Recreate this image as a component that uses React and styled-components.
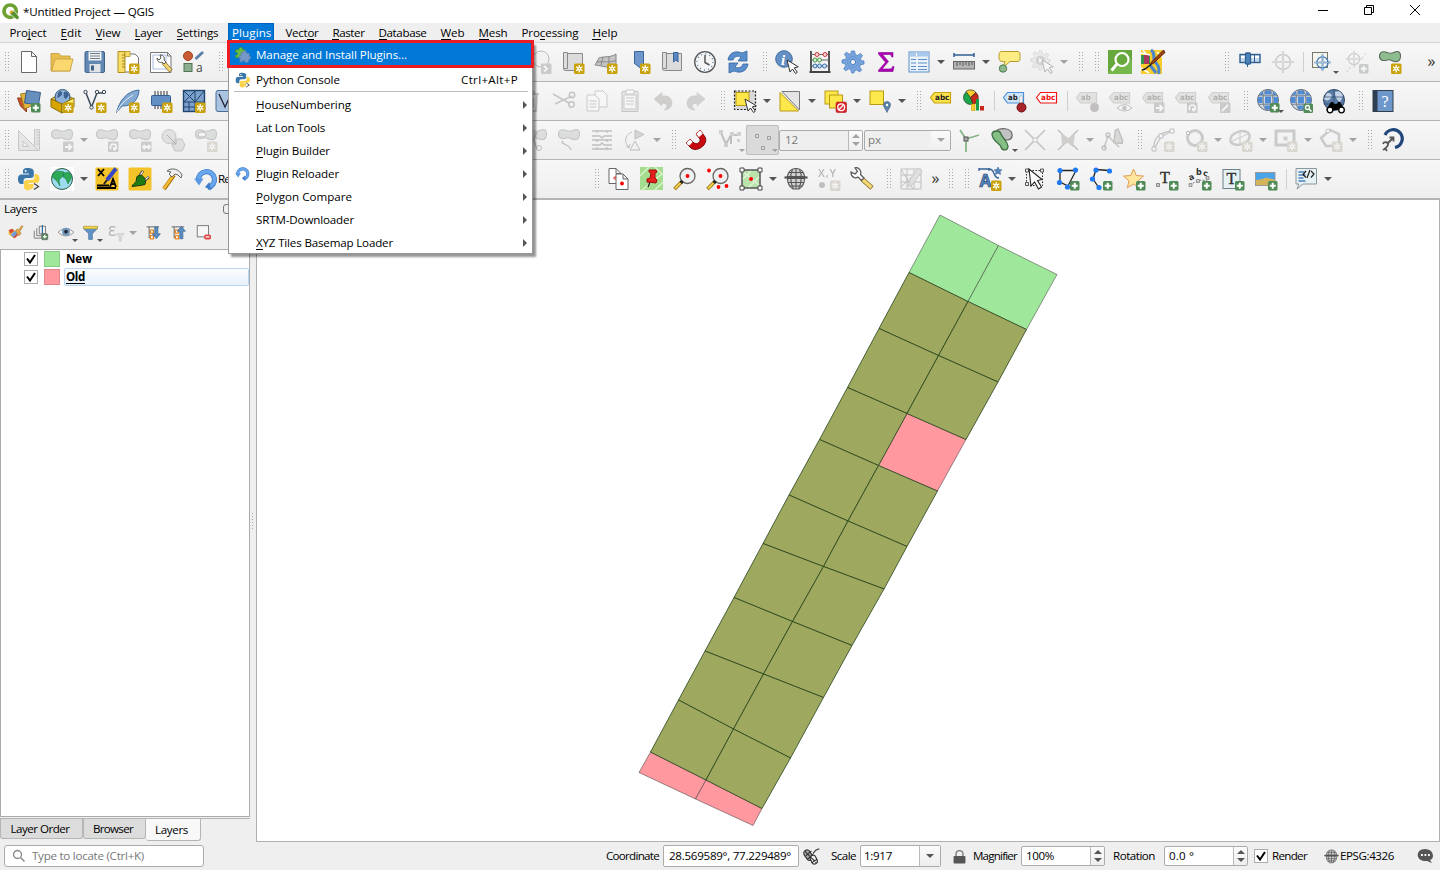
import React, { useLayoutEffect, useRef, useState } from 'react';
import styled, { createGlobalStyle, css } from 'styled-components';

const GlobalStyle = createGlobalStyle`
  * { box-sizing: border-box; }
  html, body { margin: 0; padding: 0; overflow: hidden; }
  body {
    font-family: "Open Sans", "Noto Sans", sans-serif;
    font-size: 11.6px;
    color: #000;
    background: #efefef;
  }
  u { text-decoration: none; border-bottom: 1px solid currentColor; display: inline-block; line-height: 12px; }
`;

/* ---------- text ---------- */

const FitText = styled.span`
  display: inline-block;
  flex: none;
  white-space: nowrap;
  font-weight: ${(p) => (p.$bold ? 700 : 400)};
  line-height: 16px;
`;

// Keeps a label at its designed width by adjusting the tracking.
function Fit({ w, bold, children }) {
  const ref = useRef(null);
  const [spacing, setSpacing] = useState(0);
  useLayoutEffect(() => {
    const el = ref.current;
    const natural = el.getBoundingClientRect().width;
    setSpacing((w - natural) / el.textContent.length);
  }, [w]);
  return (
    <FitText ref={ref} $bold={bold} style={{ letterSpacing: `${spacing}px` }}>
      {children}
    </FitText>
  );
}

/* ---------- window frame ---------- */

const Window = styled.div`
  position: relative;
  width: 1440px;
  height: 870px;
  display: flex;
  flex-direction: column;
  background: #efefef;
  overflow: hidden;
`;
const TitleBar = styled.header`
  height: 23px;
  flex: none;
  display: flex;
  align-items: center;
  background: #fff;
  padding: 0 19px 0 2px;
  gap: 4px;
`;
const WindowButtons = styled.div`
  margin-left: auto;
  display: flex;
  gap: 34px;
  margin-top: -3px;
`;
const MenuBar = styled.nav`
  height: 20px;
  flex: none;
  display: flex;
  align-items: stretch;
  padding-left: 5.5px;
  border-bottom: 1px solid #d3d3d3;
`;
const MenuTitle = styled.div`
  display: flex;
  align-items: center;
  padding: 0 3px 0 4px;
  margin-right: 7px;
  ${(p) =>
    p.$open &&
    css`
      margin-left: -0.5px;
      background: #0078d7;
      color: #fff;
      box-shadow: inset 0 0 0 1px #0062b8;
    `}
`;

/* ---------- toolbars ---------- */

const ToolRow = styled.div`
  height: 39px;
  flex: none;
  display: flex;
  align-items: center;
  background: linear-gradient(#f7f7f7, #eeeeee);
  border-bottom: 1px solid #b4b4b4;
  padding-left: 12.5px;
`;
const HandleBox = styled.div`
  width: 16px;
  flex: none;
  display: flex;
  padding-left: 8.5px;
`;
const Dots = styled.i`
  width: 5px;
  height: 20px;
  background-image: radial-gradient(circle at 0.5px 0.5px, #a9a9a9 0.6px, transparent 0.8px);
  background-size: 3px 3px;
`;
const Handle = () => (
  <HandleBox>
    <Dots />
  </HandleBox>
);
const LeadHandle = styled(HandleBox)`
  margin-left: -16px;
`;
const Gap = styled.div`
  width: ${(p) => p.$w}px;
  flex: none;
`;
const ToolCaption = styled.div`
  width: 368.5px;
  margin-left: -4.5px;
  flex: none;
`;
const Divider = styled.div`
  width: 7px;
  height: 20px;
  flex: none;
  background: linear-gradient(#cfcfcf, #cfcfcf) 3.5px 0 / 1px 100% no-repeat;
`;
const ToolBox = styled.div`
  width: ${(p) => (p.$menu ? 45 : 33)}px;
  height: 30px;
  flex: none;
  position: relative;
  display: flex;
  align-items: center;
  padding-left: 4.5px;
  gap: 6px;
  svg.art {
    flex: none;
    overflow: visible;
    ${(p) =>
      p.$off &&
      css`
        filter: grayscale(0.85);
        opacity: ${p.$pressed ? 0.6 : 0.32};
      `}
  }
  ${(p) =>
    p.$pressed &&
    css`
      background: #dadada;
      border-radius: 2px;
      box-shadow: inset 0 0 0 1px #bdbdbd;
    `}
`;
const Arrow = styled.i`
  width: 0;
  height: 0;
  flex: none;
  border: 4px solid transparent;
  border-top-color: ${(p) => (p.$off ? '#a3a3a3' : '#555')};
  border-bottom: 0;
`;
const CornerArrow = styled(Arrow)`
  position: absolute;
  right: 1px;
  bottom: 3px;
  border-width: 3px;
  border-bottom: 0;
`;
const Chevron = styled.span`
  width: 13px;
  font-size: 16px;
  line-height: 20px;
  height: 23px;
  padding-left: 4px;
  flex: none;
  color: #333;
`;
const SpinBox = styled.div`
  width: ${(p) => p.$w}px;
  height: ${(p) => p.$h || 21}px;
  flex: none;
  display: flex;
  align-items: center;
  background: ${(p) => (p.$off ? '#efefef' : '#fff')};
  color: ${(p) => (p.$off ? '#787878' : '#000')};
  border: 1px solid #ababab;
  border-radius: 2px;
  padding-left: ${(p) => p.$pad || 5}px;
  overflow: hidden;
`;
const SpinArrows = styled.div`
  width: ${(p) => p.$w || 14}px;
  align-self: stretch;
  margin-left: auto;
  border-left: ${(p) => (p.$plain ? '0' : '1px solid #b9b9b9')};
  background: linear-gradient(#fbfbfb, #eee);
  display: flex;
  flex-direction: column;
  align-items: center;
  justify-content: center;
  gap: 4px;
`;
const UpArrow = styled(Arrow)`
  transform: rotate(180deg);
`;

/* ---------- icon drawing ---------- */

const Star = () => (
  <g>
    <rect x="13" y="13.5" width="10.5" height="10.5" rx="1.5" fill="#c9a20b" />
    <path d="M18.2 15v7.4M15 16.8l6.4 3.8M21.4 16.8 15 20.6" stroke="#fff" strokeWidth="1.3" />
    <circle cx="18.2" cy="18.7" r="1.7" fill="#fff" />
    <circle cx="18.2" cy="18.7" r=".7" fill="#c9a20b" />
  </g>
);
const Plus = () => (
  <g>
    <rect x="14" y="14" width="9.5" height="9.5" rx="1.5" fill="#508a57" />
    <path d="M18.750 15.700v6M15.750 18.700h6" stroke="#fff" strokeWidth="2" />
  </g>
);
const BadgeArrow = ({ d = 'M15 19h6M18.5 16l3 3-3 3' }) => (
  <g>
    <rect x="13" y="13.5" width="10.5" height="10.5" rx="1" fill="#6f7f6f" />
    <path d={d} stroke="#fff" strokeWidth="1.8" fill="none" />
  </g>
);
const Blob = ({ fill = '#8dbd8f' }) => (
  <path
    d="M1.500 6C1.500 1.500 6 1 9 2.500s5 1 8-.5c4-1.500 6 1 5.500 5s-3 5-6 4.500-4-2.500-7-1.500c-4 1-8 1-8-4z"
    fill={fill}
    stroke="#5b6b5b"
    strokeWidth="1.1"
  />
);
const Tag = ({ fill = '#fbe24a', stroke = '#c9a20b', ink = '#222', text = 'abc' }) => (
  <g>
    <path d="M1.500 10 5.500 5h16v10.500h-16z" fill={fill} stroke={stroke} strokeWidth="1.200" />
    <text x="6" y="12.800" fontSize="7.600" fontWeight="700" fontFamily="DejaVu Sans, sans-serif" fill={ink} textLength={text.length * 4.8} lengthAdjust="spacingAndGlyphs">
      {text}
    </text>
  </g>
);
const Globe = () => (
  <g>
    <circle cx="12" cy="11" r="10.500" fill="#d3d6da" stroke="#5f6f82" />
    <path d="M9 1.500h6v4H9zM9 7.500h6v7H9zM9 16.500h6v4H9zM2 8h4.500v6H2zM17.500 8H22v6h-4.500zM4.500 4l3-1.500-.8 3.500H3.500zM19.500 4l-3-1.500.8 3.500h3.200z" fill="#4f8cd6" />
    <ellipse cx="12" cy="11" rx="5" ry="10.500" stroke="#6b7a8c" strokeWidth="1" />
    <path d="M3 6.700h18M3 15.300h18" stroke="#7a8896" strokeWidth="1" />
  </g>
);
const Python = () => (
  <g>
    <path d="M11 1C6 1 6 3 6 4.500v2h6v1H4.500C1.500 7.500 1 10 1 12.500S2 17 4.500 17h2v-3c0-2 1-3 3-3h4.300c2 0 3-1 3-3V4.500C16.800 2 14 1 11 1z" fill="#3b77a8" />
    <path d="M12 22.500c4.500 0 4.500-2 4.500-3.500v-2h-5v-1h7.500c3 0 3.500-2.500 3.500-4.500s-1-4.500-3.500-4.500h-1.500v3c0 2-1 3-3 3h-4.500c-2 0-3 1-3 3v4c0 2.500 2 3.500 5 3.500z" fill="#fbd34b" />
    <circle cx="8.700" cy="4" r="1" fill="#fff" />
    <path d="m17 16.500 4.500 3-4.500 3" stroke="#444" strokeWidth="1.300" fill="none" />
  </g>
);
const Reload = () => (
  <g>
    <path d="M4.500 13.500A8 8 0 1 1 14 20.500" stroke="#3f7cc9" strokeWidth="5.200" />
    <path d="M4.500 13A8 8 0 1 1 14 20.300" stroke="#6ba7ee" strokeWidth="3.600" />
    <path d="M0 11.500h9.500l-4.500 7z" fill="#5b99e5" />
    <path d="m15.500 15-4.500 5 6 3.500z" fill="#3f7cc9" />
  </g>
);
const Crosshair = ({ color = '#999' }) => (
  <g fill="none" stroke={color} strokeWidth="1.500">
    <circle cx="12" cy="12" r="7.500" />
    <path d="M12 1v22M1 12h22" strokeWidth="2.200" />
    <path d="M12 1v22M1 12h22" strokeWidth=".6" stroke="#fff" />
  </g>
);
const Pointer = () => (
  <path d="M12 10l3 12 2.500-3 3 4.500 1.800-1.200-3-4.500 4-1z" fill="#fff" stroke="#333" strokeWidth="1" />
);
const Lens = () => (
  <g>
    <circle cx="14.500" cy="9" r="7.500" fill="#eeeff0" stroke="#666" strokeWidth="1.300" />
    <path d="m8.500 15-7 7" stroke="#8b6a00" strokeWidth="3.600" />
    <path d="m7.500 16-5.500 5.500" stroke="#f3cf4d" strokeWidth="2" />
    <path d="m9.500 14-1.700 1.700" stroke="#222" strokeWidth="3.400" />
    <circle cx="14.500" cy="9" r="1.900" fill="#f00" />
  </g>
);
const Wrench = () => (
  <g>
    <path d="m12 12 10 9" stroke="#8b7430" strokeWidth="5" />
    <path d="m12 12 9.500 8.500" stroke="#f2d675" strokeWidth="3.200" />
    <path d="M1 5c0 5 4 7 7 5l3.500 3.500 2.500-2.500L10.500 7.500C12 4 9 0 5 .8l2.500 3.700L5 7z" fill="#fff" stroke="#555" strokeWidth="1.200" />
  </g>
);
const Gear = ({ fill = '#78a3dc', stroke = '#4a7fc0' }) => (
  <g stroke={stroke}>
    <path
      d="M10.500 1h3l.8 3.600 2.200.9 3-2 2 2-2 3 .9 2.200L23 11v3l-3.400.7-1 2.200 2 3-2 2-3-2-2.200 1L12.800 23h-2l-.9-3.200-2.200-1-3 2-2-2 2-3-1-2.200L1 13v-3l3.400-.6 1-2.200-2-3 2-2 3 2 1.400-.7z"
      fill={fill}
      strokeWidth=".8"
    />
    <circle cx="12" cy="12" r="2.600" fill="#f4f4f4" />
    <circle cx="12" cy="12" r="5.500" fill="none" strokeWidth=".6" opacity=".5" />
  </g>
);
const VPoly = () => (
  <g fill="none" stroke="#3a4a58" strokeWidth="1.500">
    <path d="m3 4 5.500 14L14 4h6" />
    <g fill="#f4f4f4" strokeWidth="1">
      <circle cx="2.500" cy="3" r="1.700" />
      <circle cx="14" cy="3" r="1.700" />
      <circle cx="21" cy="3" r="1.700" />
      <circle cx="8.500" cy="18.500" r="1.700" />
    </g>
  </g>
);
const Scroll = () => (
  <path d="M2.500 2.500h4v16h-4zM6.500 3.500h15v17h-17c-2.500 0-2-2-2-2" fill="#dcdcdc" stroke="#888" />
);
const Serif = ({ x, y, size, children, weight = 700, fill = '#333' }) => (
  <text x={x} y={y} fontSize={size} fontWeight={weight} fontFamily="Liberation Serif, serif" fill={fill}>
    {children}
  </text>
);
const Page = ({ x, y, w, h }) => (
  <path
    d={`M${x} ${y}h${w - 5}l5 5v${h - 5}h-${w}zM${x + w - 5} ${y}v5h5`}
    fill="#fff"
    stroke="#666"
    strokeWidth="1"
  />
);
const PALE = { fill: '#cdbf8b', stroke: '#887' };

const ART = {
  newPage: <path d="M4.500 1.500h10l5 5v16h-15zM14.500 1.500v5h5" fill="#fff" stroke="#686868" />,
  folder: (
    <g stroke="#c09a3a" strokeWidth=".8">
      <path d="M1 21V3.500h8l2 2.500h9v15z" fill="#e8bf4f" />
      <path d="M1.500 21 5 9h18l-3 12z" fill="#fbd76f" />
    </g>
  ),
  save: (
    <g>
      <rect x="2" y="1.500" width="19.500" height="21" rx="1.500" fill="#6187b3" stroke="#3f6089" />
      <path d="M5.500 1.500h13v9h-13z" fill="#f1f3f5" />
      <path d="M7 3.500h10M7 6h10M7 8.500h10" stroke="#6f7a85" strokeWidth="1" />
      <path d="M6.500 14h11v8.500h-11z" fill="#e2e5e8" />
      <path d="M8 15.500h3v5H8z" fill="#3f6089" />
    </g>
  ),
  layout: (
    <g>
      <path d="M3 4h16l3.500 3.500V22H3z" fill="#fff" stroke="#777" />
      <path d="M2 1.500h7v21H2z" fill="#f8dc68" stroke="#b08f20" />
      <path d="M6 5h3M6 8h3M6 11h3M6 14h3M6 17h3" stroke="#8b7117" strokeWidth=".8" />
      <path d="M9 1.500h5v5H9z" fill="#f8dc68" stroke="#b08f20" strokeWidth=".8" />
      <Star />
    </g>
  ),
  layoutManager: (
    <g>
      <path d="M1.500 2.500h17l3.500 3.500v16.500H1.500zM18.500 2.500v3.500h3.500" fill="#fff" stroke="#777" />
      <path d="M4 5h13v14H4z" stroke="#a9bce0" />
      <path d="m14 12 8 9" stroke="#8b7430" strokeWidth="4.200" />
      <path d="m14 12 7.500 8.500" stroke="#f2d675" strokeWidth="2.800" />
      <path d="M8 8c0 4 3 5 5 4l2 2 2-2-2-2c1-3-1-5-4-5l1 3-2 2z" fill="#fff" stroke="#555" />
    </g>
  ),
  style: (
    <g>
      <circle cx="6" cy="6" r="4.500" fill="#c95a34" stroke="#a03e1e" />
      <path d="m13.500 9 7.500-7" stroke="#5c7fa8" strokeWidth="2.800" />
      <rect x="2" y="13.500" width="8" height="8" fill="#8dae8f" stroke="#4f7552" />
      <text x="14" y="21.500" fontSize="12" fontFamily="Open Sans, sans-serif" fill="#444">a</text>
    </g>
  ),
  zoomLast: (
    <g>
      <circle cx="13" cy="9" r="8" fill="#eee" stroke="#444" />
      <BadgeArrow d="m16 16 3 2.800-3 2.800" />
    </g>
  ),
  mapNew: <g><Scroll /><Star /></g>,
  map3d: (
    <g>
      <path d="M1 15 5 8c5-2 11 0 17-4v12c-6 3-12 0-21-1zM3 12c6-1 12 1 19-1.500M9 7 7 15M15 6v10" fill="#c4c4c4" stroke="#888" />
      <Star />
    </g>
  ),
  bookmarkNew: <g><path d="M7.500 1.500h9V20l-4.500-3-4.500-3.500z" fill="#6f97cb" stroke="#39649c" /><Star /></g>,
  bookmarks: <g><Scroll /><path d="M13.500 2.500h4.500V12l-2.200-2-2.300 2z" fill="#5a87c0" stroke="#39649c" /></g>,
  clock: (
    <g>
      <circle cx="12" cy="12" r="10.300" fill="#f4f4f4" stroke="#555" strokeWidth="1.300" />
      <circle cx="12" cy="12" r="8" fill="none" stroke="#4e80b5" strokeDasharray="1 3.190" strokeWidth="1.300" />
      <path d="M12 5v7.500l4.500 2.500" stroke="#555" fill="none" strokeWidth="1.500" />
    </g>
  ),
  refresh: (
    <g fill="#5a8fcb" stroke="#3468a4" strokeWidth=".8">
      <path d="M2 10C3 3 9 0 16 3l5-2v10H12l3-4c-4-2-7 0-8 3z" />
      <path d="M22 14c-1 7-7 10-14 7l-5 2V13h9l-3 4c4 2 7 0 8-3z" />
    </g>
  ),
  identify: (
    <g>
      <circle cx="9" cy="9" r="8.300" fill="#648fc4" stroke="#426e9e" />
      <Serif x="6" y="14.500" size="15" fill="#fff"><tspan fontStyle="italic">i</tspan></Serif>
      <Pointer />
    </g>
  ),
  abacus: (
    <g strokeWidth="1">
      <path d="M3 1v20M21 1v20M1.500 22h21" stroke="#444" strokeWidth="1.800" />
      <path d="M3 4.500h18M3 10h18M3 16h18" stroke="#666" />
      <g fill="#ffd6d6" stroke="#c33"><circle cx="9" cy="4.500" r="2" /><circle cx="17" cy="4.500" r="2" /></g>
      <g fill="#d9f4d9" stroke="#4a9a4a"><circle cx="7" cy="10" r="2" /><circle cx="11.500" cy="10" r="2" /></g>
      <g fill="#cfe2f6" stroke="#356da5"><circle cx="7" cy="16" r="2" /><circle cx="11.500" cy="16" r="2" /><circle cx="16.500" cy="16" r="2" /></g>
    </g>
  ),
  gear: <Gear />,
  sigma: <path d="M4.500 2.500h14.500v4.500h-1.200c-.5-2-1-2.500-3-2.500H8.500l6 7-6.500 7.500h7.500c2 0 2.500-.8 3.200-2.500H20l-1 5H4.500v-1.200l7-8-7-8.200z" fill="#b000b5" stroke="#80008a" strokeWidth=".6" />,
  table: (
    <g>
      <rect x="2" y="2" width="20" height="20" fill="#e9f1fa" stroke="#5f8fc4" />
      <path d="M2.500 2.500h19v4h-19z" fill="#a9c8ea" />
      <path d="M4 9.500h5M11 9.500h9M4 13h5M11 13h9M4 16.500h5M11 16.500h9M4 19.500h5M11 19.500h9" stroke="#5f8fc4" strokeWidth="1" />
      <path d="M9.500 3v3" stroke="#fff" />
    </g>
  ),
  ruler: (
    <g>
      <path d="M2 5h20M2 3v4M22 3v4" stroke="#335f91" strokeWidth="1.500" />
      <rect x="1.500" y="11.500" width="21" height="7.500" fill="#b5b5b5" stroke="#666" />
      <path d="M5 12v4M8 12v3M11 12v4M14 12v3M17 12v4M20 12v3" stroke="#555" />
    </g>
  ),
  tip: (
    <g>
      <path d="M6 1.500h14c3 0 3 1 3 5s0 5-3 5h-7l-7 6 2-6c-5 0-6 0-6-5s1-5 4-5z" fill="#fbeb83" stroke="#b59b2a" />
      <circle cx="6" cy="18.500" r="3.700" fill="#8cb98c" stroke="#4c7a4e" />
    </g>
  ),
  gearRun: (
    <g>
      <g transform="scale(.87)"><Gear fill="#d8d8d8" stroke="#888" /></g>
      <circle cx="10.500" cy="10.500" r="4.700" fill="#6e91b4" />
      <path d="m9 8 4.500 2.500L9 13z" fill="#fff" />
      <Pointer />
    </g>
  ),
  greenSearch: (
    <g>
      <rect width="24" height="24" fill="#76b84c" />
      <path d="M0 0h24v10L0 22z" fill="#67a83d" />
      <circle cx="14" cy="9.500" r="6.500" fill="none" stroke="#fff" strokeWidth="2.200" />
      <path d="m9 14-5.500 6.500" stroke="#fff" strokeWidth="3" />
    </g>
  ),
  osm: (
    <g>
      <rect width="21" height="24" fill="#f8cc2e" />
      <path d="M0 5h9v9H0z" fill="#31954a" />
      <path d="M3 5h5v9H3z" fill="#a83762" />
      <path d="M10 0c6 4 0 8 5 13s2 8 3 11M9 15l6 8" stroke="#4a86c8" strokeWidth="3" fill="none" />
      <path d="m0 3 9 2M0 18l8 5M16 2l5 5M2 0l3 4" stroke="#fff" strokeWidth="1.500" />
      <path d="m22.500 0-12 12-1.500 3 3-1.500 12-11z" fill="#a5460f" stroke="#54200a" />
      <path d="M10 15c-3 0-3 4-9 5" stroke="#222" strokeWidth="1.500" fill="none" />
    </g>
  ),
  hub: (
    <g stroke="#2f5e91">
      <rect x="2" y="4.500" width="20" height="8" fill="#c5d9ed" strokeWidth="1.400" />
      <path d="M3 7h18" stroke="#fff" strokeWidth="2" />
      <rect x="7.500" y="3" width="5" height="11" rx="1" fill="#4d83bb" strokeWidth="1.300" />
      <path d="M9.500 14v3M16.500 5v7" />
    </g>
  ),
  crosshair: <Crosshair color="#777" />,
  crosshairOn: (
    <g>
      <rect x="1.500" y="2.500" width="15" height="15" fill="#f5f5ee" stroke="#77776c" />
      <g transform="translate(2.500 3.500) scale(.75)"><Crosshair color="#3d78b7" /></g>
    </g>
  ),
  crosshairAdd: (
    <g>
      <g transform="scale(.75)"><Crosshair color="#777" /></g>
      <path d="m2 22 4-6M17 8l5-6" stroke="#777" strokeDasharray="2 2" />
      <Plus />
    </g>
  ),
  blobStar: <g><Blob /><Star /></g>,
  sources: (
    <g>
      <path d="m.5 9 9 0 0 14-6-6z" fill="#c6552c" stroke="#8e3a1a" />
      <path d="m3.500 5 12-2 1 13-9 4z" fill="#e2b43c" stroke="#a37e1b" />
      <path d="m9.500 1.500 14 2-2 12.500-14-2z" fill="#668fbe" stroke="#355f90" />
      <Plus />
    </g>
  ),
  geopackage: (
    <g>
      <path d="m1 10 11-6 12 6-10 6z" fill="#e8c03a" stroke="#8b6b08" />
      <circle cx="12.500" cy="8" r="7.500" fill="#8fb0d8" stroke="#33587f" />
      <path d="M8 4c2-3 5-2 4 1s-3 3-5 4zM14 3c3-1 4 0 5 3l-3 4c-2-1-3-3-2-7z" fill="#3d6290" />
      <path d="m1 10 11 5v9L1 18z" fill="#d8a500" stroke="#8b6b08" />
      <path d="m24 9-12 6v9l12-6z" fill="#fbee6b" stroke="#8b6b08" />
      <Star />
    </g>
  ),
  vector: <g><VPoly /><Star /></g>,
  feather: (
    <g>
      <path d="M.5 23.500C3 13 10 2 23 1c0 5-3 12-8 14-4 2-7 2-9 2z" fill="#84a9d2" stroke="#41709f" />
      <path d="M1 23c3-7 8-12 16-17" stroke="#e3edf7" fill="none" />
      <Star />
    </g>
  ),
  chip: (
    <g>
      <path d="M6 2v18M9 2v18M12 2v18M15 2v18M18 2v18" stroke="#333" />
      <rect x="2.500" y="6.500" width="19" height="10" rx="1" fill="#628fc4" stroke="#315f91" />
      <Star />
    </g>
  ),
  gridMesh: (
    <g>
      <rect x="1.500" y="1.500" width="21" height="21" fill="#7ca1cd" stroke="#21446c" strokeWidth="1.400" />
      <path d="M13 2v20M2 13h20M2 2l11 11M13 2 2 13M22 2 13 13M7 13v9M2 18h11" stroke="#21446c" fill="none" />
      <Star />
    </g>
  ),
  meshV: (
    <g>
      <rect x="1" y="1.500" width="22" height="21" rx="2" fill="#a9c3e0" stroke="#4a6e98" />
      <path d="m4 5 6 13 6-13" stroke="#223" fill="none" strokeWidth="1.300" />
    </g>
  ),
  trash: <path d="M4 5h16M6 6l1 16h10l1-16M9 3h6v2M10 9v10M14 9v10" fill="none" stroke="#955" strokeWidth="2" />,
  scissors: (
    <g fill="none" stroke="#666" strokeWidth="1.500">
      <path d="m1 5 16 9M3 15 20 7" /><circle cx="20" cy="6" r="2.700" /><circle cx="19.500" cy="15.500" r="2.700" />
    </g>
  ),
  copy: <g><path d="M10 2h8l4 4v12H10z" fill="#fff" stroke="#777" /><path d="M2 6h8l4 4v12H2zM4.500 12h7M4.500 15h7M4.500 18h7" fill="#fff" stroke="#777" /></g>,
  paste: <g><path d="M4 2.500h16v20H4z" fill="#ccc" stroke="#666" /><path d="M8 1h8v4H8zM6 6h12v14H6zM8 9h8M8 12h8M8 15h8" fill="#fff" stroke="#777" /></g>,
  undo: <path d="m3 10 8-6.500V7c7-1 10 3 10 7s-3 7-8 7c4-3 4-7-2-6.500V17z" fill="#a08050" stroke="#666" strokeWidth=".5" />,
  redo: <path d="m21 10-8-6.500V7C6 6 3 10 3 14s3 7 8 7c-4-3-4-7 2-6.500V17z" fill="#7d917d" stroke="#666" strokeWidth=".5" />,
  select: (
    <g>
      <rect x="1.500" y="2" width="21" height="18.500" fill="#d9d9d9" stroke="#222" strokeDasharray="2 1.500" strokeWidth="1.200" />
      <rect x="3" y="3.500" width="13" height="13" fill="#fde84c" stroke="#b99a12" />
      <Pointer />
    </g>
  ),
  invert: <g><path d="M4 2.500h17.500V21z" fill="#e4e4e4" stroke="#777" /><path d="M2 3.500V22h18.500z" fill="#fde84c" stroke="#b99a12" /></g>,
  deselect: (
    <g stroke="#b99a12">
      <rect x="2" y="2" width="13" height="13" fill="#fde84c" /><rect x="6.500" y="6" width="13" height="13" fill="#fde84c" />
      <rect x="13" y="13" width="10.500" height="10.500" rx="1.500" fill="#d8282c" stroke="#a00" strokeWidth=".5" />
      <circle cx="18.200" cy="18.200" r="3.400" fill="none" stroke="#fff" strokeWidth="1.300" /><path d="m16 20.500 4.500-4.500" stroke="#fff" strokeWidth="1.300" />
    </g>
  ),
  selectPin: <g><rect x="2" y="2" width="13.500" height="13.500" fill="#fde84c" stroke="#b99a12" /><path d="M19 23.500c-1-3-3.500-5-3.500-7.500a3.500 3.500 0 1 1 7 0c0 2.500-2.500 4.500-3.500 7.500z" fill="#5d83a8" stroke="#3c6286" strokeWidth=".6" /><circle cx="19" cy="16" r="1.200" fill="#fff" /></g>,
  tag: <g transform="translate(0 -1.500)"><Tag /></g>,
  pie: (
    <g stroke="#222" strokeWidth=".6">
      <circle cx="8.500" cy="8.500" r="7" fill="#1aa64b" /><path d="M8.500 8.500 4 2.500a7 7 0 0 1 10 1z" fill="#f8cc2e" /><path d="m8.500 8.500 5.500-5a7 7 0 0 1-3 12z" fill="#c8281c" />
      <path d="M9.500 15h3.500v6.500H9.500z" fill="#f8cc2e" stroke="#c79800" /><path d="M14 10h3v11.500h-3z" fill="#179c45" stroke="none" /><path d="M18 17h4v4.500h-4z" fill="#c8281c" stroke="none" />
    </g>
  ),
  tagPin: <g><g transform="translate(0 -1.500)"><Tag fill="#cfe6fc" stroke="#4a8fd8" text="ab" /></g><path d="M17.500 8.500a1.500 2 0 0 1 3 0V16h-3z" fill="#f2f2f2" stroke="#999" strokeWidth=".5" /><circle cx="19.500" cy="18.500" r="4.500" fill="#a8242a" stroke="#6d1216" /></g>,
  tagRed: <g transform="translate(0 -1.500)"><Tag fill="#fff" stroke="#f01414" ink="#f01414" /></g>,
  tagDot: <g transform="translate(0 -1.500)"><Tag {...PALE} text="ab" /><circle cx="19.500" cy="20" r="4.500" fill="#754" /></g>,
  tagEye: <g transform="translate(0 -1.500)"><Tag {...PALE} /><path d="M9 20.500q7.500-7 15 0-7.500 6-15 0z" fill="#fff" stroke="#555" /><circle cx="16.500" cy="20.500" r="2.300" fill="#666" /></g>,
  tagMove: <g><g transform="translate(0 -1.500)"><Tag {...PALE} /></g><BadgeArrow /></g>,
  tagRotate: <g><g transform="translate(0 -1.500)"><Tag {...PALE} /></g><BadgeArrow d="M16 21a3 3 0 1 1 3 1M19 22v-3" /></g>,
  tagEdit: <g><g transform="translate(0 -1.500)"><Tag {...PALE} /></g><BadgeArrow d="m15 22 6-6" /></g>,
  globePlus: <g><Globe /><Plus /></g>,
  globeSearch: <g><Globe /><rect x="14.500" y="14.500" width="9.500" height="9.500" rx="1.500" fill="#508a57" /><circle cx="18.500" cy="18.500" r="2" fill="none" stroke="#fff" strokeWidth="1.300" /><path d="m20 20 2.500 2.500" stroke="#fff" strokeWidth="1.500" /></g>,
  binoculars: (
    <g>
      <circle cx="12" cy="11" r="10.500" fill="#5a7ca6" stroke="#2f4868" /><path d="M5 4c4 0 6 2 4 5s-5 3-7 1zM13 3c4-2 6 0 8 4l-3 6c-3-2-5-5-5-10z" fill="#c4d4e6" /><path d="M12 1v20M2 8h20M3 15h18" stroke="#2f4868" strokeWidth=".7" />
      <path d="M9 13h2l1 2 3 0 1-2h2l5 8H4z" fill="#000" /><circle cx="8" cy="21" r="2.800" fill="#fff" stroke="#000" strokeWidth="1.300" /><circle cx="19.500" cy="21" r="2.800" fill="#fff" stroke="#000" strokeWidth="1.300" />
    </g>
  ),
  help: <g><rect x="2" y="1.500" width="20" height="21" fill="#6d97cb" stroke="#333e4c" /><rect x="2" y="1.500" width="4.500" height="21" fill="#2c3e50" /><Serif x="10.500" y="17.500" size="16" weight={400} fill="#fff">?</Serif></g>,
  setSquare: <g stroke="#7b6a62" fill="#d8cbc4"><path d="M17.500 1.500h5v21h-5z" /><path d="M1.500 2.500v20h20z" /><path d="M6 13v5.500h5.500z" fill="#f5f5f5" /><path d="M19 4h3M19 7h3M19 10h3M19 13h3M19 16h3" /></g>,
  blobMove: <g><Blob /><BadgeArrow /></g>,
  blobRotate: <g><Blob /><BadgeArrow d="M16 21a3 3 0 1 1 3 1M19 22v-3" /></g>,
  blobScale: <g><Blob /><BadgeArrow d="M15 19h7M17 17l-2 2 2 2M20 17l2 2-2 2" /></g>,
  simplify: <g fill="#bbb" stroke="#666"><circle cx="8" cy="8.500" r="7" /><path d="M14 11h7l3 6-3 6h-7l-3-6z" /><path d="m6 7 9 9M15 12v4h-4" stroke="#333" fill="none" /></g>,
  blobRing: <g><Blob /><ellipse cx="8" cy="6.500" rx="4" ry="2.500" fill="#f4f4f4" stroke="#555" /><Star /></g>,
  splitPart: <g><Blob /><path d="m6 2 7 19M13 4 5 20" stroke="#555" strokeWidth="1.500" /><circle cx="5" cy="20" r="2.500" fill="none" stroke="#555" /><circle cx="15" cy="20" r="2.500" fill="none" stroke="#555" /></g>,
  reshape: <g><Blob /><path d="M6 13c-4 3 7 3 8 9" stroke="#555" fill="none" strokeWidth="1.300" /></g>,
  merge: <g stroke="#555" strokeWidth="1.300" fill="none"><path d="M2 3h20M2 8h8l2 2 2-2h8M2 12h20M2 17h8l2-2 2 2h8M2 21h20M7 2v3M17 2v3M7 11v3M17 11v3M7 19v3M17 19v3" /></g>,
  rotatePoint: <g stroke="#555" fill="none"><path d="M12 2v9l9-4.500z" fill="#999" /><path d="m12 13-5 9h10z" fill="#eee" /><path d="M9 4c-8 3-8 11-3 15M3 18l3 2 1-4" /></g>,
  magnet: <g><path d="m2 15 5 5c6 5 18-4 14-11l-5-7-4 4 4 5c1 3-3 6-6 4l-4-4z" fill="#c80a10" stroke="#7d0000" /><path d="m2 15 4-4 3 3-4 4zM12 6l4-4 3 3.500-4 4z" fill="#fff" stroke="#b11" strokeDasharray="1 1" /></g>,
  snapV: <g><path d="m4 5 5 11 5-9h6M14 16V8" stroke="#555" fill="none" strokeWidth="2" /><path d="M2 2h4v4H2zM13 4h4v4h-4zM20 4h4v4h-4zM7 15h4v4H7zM20 11h3v3h-3z" fill="#888" /></g>,
  snapDots: <g fill="#ddd" stroke="#777"><path d="M5.500 6.500h3v3h-3zM17.500 8.500h3v3h-3zM11.500 18.500h3v3h-3z" /></g>,
  triLines: <g><path d="m9 11-6-9M9 11l13-4M9 11v13" stroke="#84b786" strokeWidth="1.800" /><rect x="7" y="9" width="4" height="4" fill="#aaa" stroke="#555" /></g>,
  blobTrace: <g><path d="M6 3c4-4 15-3 16 3s-5 7-8 5" fill="#c3c3c3" stroke="#666" strokeWidth="1.200" /><path d="M2 6c1-4 8-4 9 0s6 6 7 12c0 5-6 5-7 1S2 13 2 6z" fill="#86bf86" stroke="#3d6f40" strokeWidth="1.300" /></g>,
  cross: <g stroke="#666" strokeWidth="1.700"><path d="m2 2 20 20M22 2 2 22" /><path d="M10 10h4v4h-4z" fill="#fff" strokeWidth="1" /></g>,
  crossFill: <g stroke="#666" strokeWidth="1.700"><path d="m2 2 20 20M22 2 2 22" /><path d="m5 5 7 5 7-3-2 12-5-4-6 1z" fill="#997f50" stroke="none" /></g>,
  tracePen: <g stroke="#555" fill="none" strokeWidth="1.300"><path d="m3 20 4-12 11 11" /><circle cx="3" cy="20" r="2" /><circle cx="7" cy="7" r="2" /><path d="m12 14 3-12 3-1 3 12-1 3z" fill="#b9a070" transform="rotate(-8 17 8)" /></g>,
  arc: <g><path d="M3 21C2 11 8 4 21 3M3 21l7-12 11-6" stroke="#666" fill="none" strokeWidth="1.300" /><path d="M1 19h4v4H1zM8 6h4v4H8zM19 1h4v4h-4z" fill="#fff" stroke="#555" /><Star /></g>,
  circle: <g><circle cx="11" cy="10" r="7.500" fill="none" stroke="#777" strokeWidth="3" /><circle cx="4" cy="5" r="1.700" fill="#fff" stroke="#444" /><Star /></g>,
  ellipse: <g><ellipse cx="11" cy="10" rx="10" ry="6.500" fill="none" stroke="#777" strokeWidth="2.500" transform="rotate(-18 11 10)" /><path d="M11 3v14M3 13l16-7" stroke="#777" /><Star /></g>,
  rect: <g><rect x="2" y="3" width="18" height="14" fill="none" stroke="#777" strokeWidth="3" /><path d="M9.500 8.500h4v4h-4z" fill="#888" /><Star /></g>,
  poly: <g><path d="M11 2 20 6v10l-6 2H7L2 10z" fill="none" stroke="#777" strokeWidth="2.500" /><circle cx="9" cy="3" r="2" fill="#fff" stroke="#555" /><Star /></g>,
  snapArc: <g><path d="M5 7A9 9 0 1 1 15 19.500" stroke="#20467c" strokeWidth="3.200" fill="none" /><path d="M3 16c1-3 6-2 5 1s-3 3-5 5M8 15l5-5M9.500 9.500h4v4M5 20l2 3" stroke="#555" fill="none" strokeWidth="1.800" /></g>,
  python: <Python />,
  earth: <g><rect width="24" height="24" fill="#fff" /><circle cx="12" cy="12" r="10.500" fill="#9cdcee" stroke="#2d5b46" /><path d="M3 6 8 4l6 1-1 4-4 4 1 6-3-5-5-4zM14 6l5-1 3 5-4 7-2-5-3-2z" fill="#2da956" stroke="#17713a" strokeWidth=".5" /></g>,
  xyEdit: <g><rect x=".500" y=".500" width="23" height="23" rx="1.500" fill="#f4c32a" /><path d="M12 13 21 1.500" stroke="#3547c8" strokeWidth="4" /><path d="m12 13-3 4" stroke="#222" strokeWidth="2" /><path d="m3 2 6 7M9 2 3 9M2 18.500h12M2 21h19M15 20l3-8 3 8M16 17h4" stroke="#000" strokeWidth="1.800" fill="none" /></g>,
  plug: <g><rect x=".500" y=".500" width="23" height="23" rx="1.500" fill="#f4c32a" /><path d="M4 19.500c1-3 3-3 4-5l1-5 4-2 5 5-1 5-5 1c-3 0-5 1-8 1z" fill="#1f7a14" stroke="#143f0e" /><path d="m12 8 3-4M17 13l4-3" stroke="#333" strokeWidth="2.600" /><path d="m12.500 7.500 2.500-3M17.500 12.500l3-2.500" stroke="#eee" strokeWidth="1.200" /></g>,
  hammer: <g><path d="m3 22 10-14" stroke="#a6720d" strokeWidth="4" /><path d="m3 21.500 10-14" stroke="#f4b92e" strokeWidth="2.500" /><path d="M6 4c5-4 12-2 15 4l-1 3-3-3-3-1-3 3-3-3 2-2z" fill="#eee" stroke="#666" /></g>,
  reload: <Reload />,
  pages: <g><Page x={2} y={1.5} w={12} h={15} /><circle cx="8" cy="11" r="1.800" fill="#f66" /><Page x={9} y={7} w={12} h={15.5} /><circle cx="15" cy="16.500" r="1.900" fill="#f00" /></g>,
  mapPin: <g><rect width="23" height="23" fill="#a5dc8f" /><path d="m0 9 9-9M23 15l-8 8M2 23 22 7M15 0l8 8" stroke="#d8f3ca" strokeWidth="1.500" /><path d="m8 20 3-7" stroke="#222" strokeWidth="1.300" /><path d="m9 3 7 0 1 2-2 1 0 5 2 2-1 3-9-1 0-3 3-1 1-5-2-1z" fill="#e61e1c" stroke="#9c0b0b" /></g>,
  lens: <Lens />,
  lensDots: <g><Lens /><circle cx="3" cy="3.500" r="1.900" fill="#f00" /><circle cx="12.500" cy="20" r="1.900" fill="#f00" /><circle cx="20.500" cy="19" r="1.900" fill="#f00" /></g>,
  mapFrame: <g><rect x="3" y="3" width="18" height="18" fill="#b9e3aa" stroke="#555" strokeWidth="1.500" /><path d="m4 12 8-8M10 20l10-10M4 5l16 13" stroke="#e0f5d8" strokeWidth="1.500" /><g fill="#fff" stroke="#444"><path d="M1 1h4v4H1zM19 1h4v4h-4zM1 19h4v4H1zM19 19h4v4h-4z" /></g><circle cx="12" cy="12" r="2" fill="#f00" /></g>,
  wireGlobe: <g stroke="#555" strokeWidth="1.100"><path d="M3.500 9.500C4 4 8 1.500 12 1.500s8 2.500 8.500 8zM3.500 11.500c0 6 3 9 5.500 10.500h6c2.500-1.500 5.500-4.500 5.500-10.500z" fill="#d2d2d2" /><path d="M.5 10.500h23" strokeWidth="2.300" /><path d="M5 5.500h14M4 15.500h16M6 19h12M12 1.500v20M8.500 2.500c-2.500 5-2.500 13 1 19M15.500 2.500c2.500 5 2.500 13-1 19" /></g>,
  xy: <g><text x="1" y="9.500" fontSize="11" fontWeight="600" fontFamily="Open Sans, sans-serif" fill="#333" textLength="18">X,Y</text><circle cx="5" cy="18" r="3" fill="#555" /><Star /></g>,
  wrench: <Wrench />,
  gridPen: <g><path d="M2 2h20v20H2zM8 2v20M15 2v20M2 8h20M2 15h20M2 2l12 20M2 20 20 3" stroke="#555" fill="none" /><path d="m9 20 2-7L19 1l4 3-9 13z" fill="#c8b7aa" stroke="#777" /></g>,
  annotation: <g><text x="1.500" y="20" fontSize="17" fontWeight="700" fontFamily="Open Sans, sans-serif" fill="#5585bb" stroke="#1f456f" strokeWidth=".7">A</text><path d="M1 2h10c7 0 3 9 10 9M1 1v3M11 1v3" stroke="#315f94" fill="none" strokeWidth="1.300" /><path d="m20 0 1.200 2.500 2.800.3-2 2 .6 2.700L20 6.200l-2.600 1.300.6-2.700-2-2 2.800-.3z" fill="#5585bb" stroke="#315f94" strokeWidth=".5" /><Star /></g>,
  pointerBox: <g><path d="M3.500 3.500h16v15h-16z" fill="none" stroke="#222" strokeDasharray="1.500 1.500" /><path d="M2.500 2h3v3h-3zM17.500 2h3v3h-3zM2.500 15.500h3v3h-3z" fill="#eee" stroke="#555" /><path d="m6 2 2 17 3.500-4 4 7 3-2-4-6.500 4.500-1z" fill="#fff" stroke="#222" strokeWidth="1.100" /></g>,
  annPoly: <g><path d="M4 3.500h16L12 19l-8-4z" fill="none" stroke="#222" strokeWidth="1.300" /><g fill="#1f7af5"><circle cx="4" cy="3.500" r="2.600" /><circle cx="19.500" cy="3" r="2.600" /><circle cx="3.500" cy="15.500" r="2.600" /><circle cx="11.500" cy="20" r="2.600" /></g><Plus /></g>,
  annLine: <g><path d="M20.500 3.500 7 2.500 4 12l6 9" fill="none" stroke="#222" strokeWidth="1.300" /><g fill="#1f7af5"><circle cx="7" cy="3" r="2.600" /><circle cx="20.500" cy="4" r="2.600" /><circle cx="3.500" cy="12" r="2.600" /><circle cx="10" cy="20.500" r="2.600" /></g><Plus /></g>,
  annStar: <g><path d="m11.500 2 2.800 6.500 7.200.6-5.500 4.700 1.700 7-6.200-3.700-6.200 3.700 1.700-7-5.500-4.700 7.200-.6z" fill="#ffe79d" stroke="#e09b55" /><Plus /></g>,
  annText: <g><Serif x="5" y="16" size="16" weight={400}><tspan stroke="#333" strokeWidth=".4">T</tspan></Serif><path d="M1.500 16.500h3v3h-3z" fill="#ccc" stroke="#888" /><Plus /></g>,
  annCurve: <g fontFamily="DejaVu Sans, sans-serif" fontWeight="700" fontSize="8" fill="#333"><text x="1" y="13" transform="rotate(-25 3 11)">a</text><text x="8" y="8">b</text><text x="15" y="9" transform="rotate(18 18 7)">c</text><path d="M2 18.500q9-8 18-4" stroke="#666" strokeDasharray="2 1.500" fill="none" /><path d="M1 16.500h3v3H1zM8.500 12.500h3v3h-3zM18 9.500h3v3h-3z" fill="#ccc" stroke="#888" strokeWidth=".8" /><Plus /></g>,
  annBox: <g><rect x="2" y="2.500" width="17" height="19" fill="#e6f1f4" stroke="#6d8088" /><Serif x="5.500" y="17" size="16" weight={400}><tspan stroke="#333" strokeWidth=".4">T</tspan></Serif><Plus /></g>,
  annImage: <g><rect x="1.500" y="5.500" width="19.500" height="13" fill="#4aa5e8" stroke="#999" /><path d="M2 13c7 0 9-3 12-2l6.500 1.500V18H2z" fill="#d4b35a" /><Plus /></g>,
  annForm: <g><path d="M2 1.500h20.500V17H9l-6 5 2-5H2z" fill="#e6f1f4" stroke="#8b979b" /><path d="M4.500 5h6M4.500 8h7M4.500 11h5M4.500 14h7" stroke="#4a80bd" strokeWidth="1.300" /><path d="m12 4-3 3.500 3 3M17 4l3 3-3 3.500M16 3l-3 8" stroke="#222" fill="none" strokeWidth="1.200" /></g>,
  brush: <g><path d="m1 9 6-3 8 7-5 8-9-6z" fill="#f2c23f" /><path d="m1 8 6-2 3 3-6 5zM7 19l6-6 4 2-6 6z" fill="#d84b32" /><path d="m4 16 7-7 4 4-6 6z" fill="#6e9de0" /><path d="m12 9 3-3 2 2 5-7 2 1-5 8 2 4-4 3z" fill="#e4a848" stroke="#a97a35" /></g>,
  addGroup: <g fill="none" stroke="#666" strokeWidth="1.300"><path d="M2 9v12h12M6 5v12h12M10 2h10v12H10z" /><path d="M15 0v14" stroke="#2f6ba7" strokeWidth="2" /><Plus /></g>,
  eye: <g><path d="M0 11Q12-1 24 11 12 22 0 11z" fill="#f2f2f2" stroke="#999" strokeWidth="1.500" /><circle cx="12" cy="10" r="6" fill="#7399bd" /><circle cx="12" cy="10" r="2.700" fill="#223" /></g>,
  filter: <g><path d="M1 3h22v3l-8 8v9H9v-9L1 6z" fill="#5f93c7" stroke="#426e9c" /><path d="M1 2h22v4H1z" fill="#f8db4b" stroke="#b6962a" /></g>,
  epsilon: <g><text x="0" y="17" fontSize="26" fontFamily="Open Sans, sans-serif" fill="#444">ε</text><path d="M13 13h11l-4 5v6h-3v-6z" fill="#bbb" stroke="#777" /></g>,
  expand: <g><path d="M1 3h20M5 3v18M5 11h4M5 20h4" stroke="#666" fill="none" strokeWidth="1.600" /><path d="M7 8h5v5H7zM7 17h5v5H7z" fill="#fff" stroke="#e98820" strokeWidth="2" /><path d="M14 3h5v11h4l-6.500 8-6.500-8h4z" fill="#5c8dc0" stroke="#2b5e93" /></g>,
  collapse: <g><path d="M1 3h20M5 3v18M5 11h4M5 20h4" stroke="#666" fill="none" strokeWidth="1.600" /><path d="M7 8h5v5H7zM7 17h5v5H7z" fill="#fff" stroke="#e98820" strokeWidth="2" /><path d="M14 22h5V10h4l-6.500-8L10 10h4z" fill="#5c8dc0" stroke="#2b5e93" /></g>,
  removeLayer: <g><rect x="2" y="1" width="18" height="18" fill="#f7f7f7" stroke="#777" strokeWidth="1.500" /><rect x="13" y="15" width="11" height="8" rx="3" fill="#e04646" /><path d="M15.500 19h6" stroke="#fff" strokeWidth="2" /></g>,
  puzzle: <g><path d="M1 4h5c-1-5 6-5 5 0h4v12H1v-4c4 1 4-5 0-4z" fill="#6abf43" stroke="#3e8c24" /><path d="m9 8 4 0c0-4 5-3 4 1l5 1-1 4c4 0 4 4 0 4l-1 5h-5c0-4-5-3-4 0l-4-1 1-5c-4 0-3-5 1-4z" fill="#7698c8" stroke="#5b7dab" /></g>,
  mouse: <g fill="none" stroke="#333" strokeWidth="1.600"><rect x="3" y="2" width="9" height="16" rx="4.500" fill="#aaa" transform="rotate(-35 8 10)" /><rect x="11" y="10" width="8" height="13" rx="4" fill="#eee" transform="rotate(-25 15 16)" /><path d="m2 4 17 17M14 8l4-5 5-2M4 11l8-7M6 16l8-7M12 21l8-5M15 16v2" /></g>,
  lock: <g><path d="M6.500 12V8a5.500 5.500 0 0 1 11 0v4" fill="none" stroke="#777" strokeWidth="2.200" /><rect x="2.500" y="11" width="19" height="12" rx="1.500" fill="#555" /></g>,
  logo: <g><circle cx="11.500" cy="11.500" r="8.700" fill="none" stroke="#6ca12f" strokeWidth="5.200" /><path d="m11 11 6 0 7 8v4h-4l-9-8z" fill="#58902b" stroke="#fff" strokeWidth="1" /><path d="m11 11 6 0-6 5z" fill="#efb02c" /></g>,
};

const Art = ({ name, size = 24 }) => (
  <svg className="art" width={size} height={size} viewBox="0 0 24 24" fill="none">
    {ART[name]}
  </svg>
);

function Tool({ name, off, menu, corner, pressed }) {
  return (
    <ToolBox $off={off} $menu={menu} $pressed={pressed}>
      <Art name={name} />
      {menu && <Arrow $off={off} />}
      {corner && <CornerArrow $off={off} />}
    </ToolBox>
  );
}
const Tools = ({ names, off }) => names.split(' ').map((n) => <Tool key={n} name={n} off={off} />);
const Lead = () => (
  <LeadHandle>
    <Dots />
  </LeadHandle>
);

/* ---------- main area ---------- */

const Workspace = styled.main`
  height: 643px;
  flex: none;
  display: flex;
  border-top: 1px solid #b4b4b4;
`;
const Dock = styled.aside`
  width: 250px;
  display: flex;
  flex-direction: column;
`;
const DockTitle = styled.div`
  height: 20px;
  display: flex;
  align-items: center;
  justify-content: space-between;
  padding: 0 17px 2px 4px;
`;
const FloatButton = styled.i`
  width: 10px;
  height: 10px;
  border: 1px solid #777;
  border-radius: 3px;
`;
const DockTools = styled.div`
  height: 29px;
  display: flex;
  align-items: center;
  padding: 0 0 4px 8px;
`;
const DockTool = styled.div`
  position: relative;
  width: ${(p) => p.$w || 25}px;
  height: 20px;
  display: flex;
  align-items: center;
  gap: 5px;
  svg.art {
    overflow: visible;
    opacity: ${(p) => (p.$off ? 0.35 : 1)};
  }
`;
const DockArrow = styled(CornerArrow)`
  right: 5px;
  bottom: 1px;
`;
const Tree = styled.div`
  height: 568px;
  flex: none;
  background: #fff;
  border: 1px solid #ababab;
`;
const LayerRow = styled.div`
  height: 18px;
  display: flex;
  align-items: center;
  padding-left: 23px;
`;
const CheckBox = styled.span`
  width: 14px;
  height: 14px;
  flex: none;
  display: flex;
  border: 1px solid #adadad;
  background: #fff;
  svg { margin: 1px 0 0 1px; }
`;
const Swatch = styled.i`
  width: 16px;
  height: 16px;
  margin: 0 4px 0 6px;
  background: ${(p) => p.$color};
  border: 1px solid ${(p) => p.$edge};
`;
const LayerName = styled.span`
  flex: 1;
  height: 18px;
  display: flex;
  align-items: center;
  padding-left: 1px;
  border: 1px solid transparent;
  ${(p) =>
    p.$active &&
    css`
      border-color: #b8d6f1;
      border-radius: 2px;
      background: linear-gradient(#fafcff, #e8f2fc);
    `}
`;
const Tabs = styled.div`
  height: 24px;
  margin-top: 1px;
  display: flex;
  align-items: flex-start;
  border-top: 1px solid #b5b5b5;
`;
const Tab = styled.div`
  width: ${(p) => p.$w}px;
  height: ${(p) => (p.$on ? 22 : 20)}px;
  display: flex;
  align-items: center;
  justify-content: center;
  padding-right: 3px;
  background: ${(p) => (p.$on ? '#f8f8f8' : '#dcdcdc')};
  border: 1px solid #b5b5b5;
  border-top: 0;
  border-left-width: ${(p) => (p.$on ? 0 : 1)}px;
  border-radius: 0 0 3px 3px;
`;
const Splitter = styled.div`
  width: 6px;
  display: flex;
  align-items: center;
  justify-content: center;
  background: #efefef;
`;
const SplitDots = styled(Dots)`
  width: 2px;
  height: 17px;
`;
const Canvas = styled.section`
  flex: 1;
  background: #fff;
  border: 1px solid #b0b0b0;
  border-top: 0;
  svg { display: block; }
`;

const LEFT = [[940, 215], [909, 272.5], [879, 328.5], [847.5, 387.5], [819.5, 439.5], [789, 495], [763, 543.5], [734, 597.5], [705, 651], [678.5, 700], [650.5, 752], [639, 772.5]];
const MID = [[998.5, 245.5], [968, 301.5], [938.5, 355.5], [907, 413.5], [878.5, 465.5], [848, 521], [823.5, 566.5], [792.5, 621.5], [763.5, 674], [733.5, 729], [706, 780], [695.5, 799]];
const RIGHT = [[1057, 274.5], [1026.5, 329.5], [998, 382], [966, 439.5], [937.5, 491], [907, 546.5], [884, 589], [852, 645.5], [823.5, 697.5], [790.5, 758], [762, 808.5], [753, 825.5]];
const FILL = { green: '#9fe89b', olive: '#9fa85f', pink: '#ff989f' };

function Parcels() {
  const cells = [];
  for (let i = 0; i < 11; i += 1) {
    [[LEFT, MID, 'l'], [MID, RIGHT, 'r']].forEach(([a, b, side]) => {
      let kind = 'olive';
      if (i === 0) kind = 'green';
      if (i === 10 || (i === 3 && side === 'r')) kind = 'pink';
      const pts = [a[i], b[i], b[i + 1], a[i + 1]].map((p) => p.join(',')).join(' ');
      cells.push({ key: `${side}${i}`, kind, pts });
    });
  }
  cells.sort((a, b) => (a.kind === 'olive') - (b.kind === 'olive'));
  return (
    <svg width="1182" height="641" viewBox="257 200 1182 641">
      {cells.map((c) => (
        <polygon
          key={c.key}
          points={c.pts}
          fill={FILL[c.kind]}
          stroke={c.kind === 'olive' ? '#1c3c14' : '#333'}
          strokeOpacity={c.kind === 'olive' ? 0.75 : 0.5}
          strokeWidth="1"
        />
      ))}
    </svg>
  );
}

/* ---------- status bar ---------- */

const StatusBar = styled.footer`
  height: 28px;
  flex: none;
  display: flex;
  align-items: center;
  padding-left: 4px;
`;
const Locator = styled.div`
  width: 200px;
  height: 22px;
  flex: none;
  display: flex;
  align-items: center;
  gap: 6px;
  padding-left: 7px;
  color: #777;
  background: #fff;
  border: 1px solid #ababab;
  border-radius: 3px;
`;

const Check = () => (
  <svg width="10" height="10" viewBox="0 0 10 10">
    <path d="M1 4.500 4 8.500 9 1" fill="none" stroke="#000" strokeWidth="2" />
  </svg>
);
const Spin = ({ off }) => (
  <SpinArrows>
    <UpArrow $off={off} />
    <Arrow $off={off} />
  </SpinArrows>
);

/* ---------- drop-down menu ---------- */

const Popup = styled.div`
  position: absolute;
  left: 228px;
  top: 42px;
  width: 305px;
  height: 212px;
  background: #fff;
  border: 1px solid #979797;
  box-shadow: 3px 3px 2px rgba(0, 0, 0, 0.42);
  padding: 0 1px;
`;
const PopupItem = styled.div`
  height: 23px;
  display: flex;
  align-items: center;
  padding-right: 4px;
`;
const PopupPrimary = styled(PopupItem)`
  height: 28px;
  margin: -3px -3px 0;
  padding-top: 2px;
  background: #0078d7;
  border: 3px solid #ed1c24;
  color: #fff;
`;
const PopupConsole = styled(PopupItem)`
  padding-right: 13px;
  justify-content: space-between;
`;
const PopupLabel = styled.span`
  display: flex;
  align-items: center;
`;
const PopupIcon = styled.span`
  width: 26px;
  flex: none;
  display: flex;
  padding-left: 5px;
`;
const PopupRule = styled.hr`
  margin: 0 3px 1px 4px;
  border: 0;
  border-top: 1px solid #bdbdbd;
`;
const SubArrow = styled.i`
  margin-left: auto;
  border: 4px solid transparent;
  border-left-color: #555;
  border-right: 0;
`;

const MENUS = [
  [37, 'Pro', 'j', 'ect'], [21, '', 'E', 'dit'], [25, '', 'V', 'iew'], [28, '', 'L', 'ayer'], [42, '', 'S', 'ettings'],
  [39.5, '', 'P', 'lugins'], [33, 'Vect', 'o', 'r'], [32, '', 'R', 'aster'], [48, '', 'D', 'atabase'], [24, '', 'W', 'eb'],
  [29, '', 'M', 'esh'], [57, 'Pro', 'c', 'essing'], [25, '', 'H', 'elp'],
];
const PLUGINS = [
  [95, 'H', 'ouseNumbering'], [69, '', 'Lat Lon Tools'], [74, 'P', 'lugin Builder'], [83, 'P', 'lugin Reloader', 'reload'],
  [96, 'P', 'olygon Compare'], [98, '', 'SRTM-Downloader'], [137, 'X', 'YZ Tiles Basemap Loader'],
];

function PluginsMenu() {
  return (
    <Popup>
      <PopupPrimary>
        <PopupIcon><Art name="puzzle" size={16} /></PopupIcon>
        <Fit w={151}>Manage and Install Plugins...</Fit>
      </PopupPrimary>
      <PopupConsole>
        <PopupLabel>
          <PopupIcon><Art name="python" size={16} /></PopupIcon>
          <Fit w={84}>Python Console</Fit>
        </PopupLabel>
        <Fit w={57}>Ctrl+Alt+P</Fit>
      </PopupConsole>
      <PopupRule />
      {PLUGINS.map(([w, key, rest, icon]) => (
        <PopupItem key={rest}>
          <PopupIcon>{icon && <Art name={icon} size={15} />}</PopupIcon>
          <Fit w={w}>{key && <u>{key}</u>}{rest}</Fit>
          <SubArrow />
        </PopupItem>
      ))}
    </Popup>
  );
}

export default function App() {
  return (
    <Window>
      <GlobalStyle />
      <TitleBar>
        <Art name="logo" size={17} />
        <Fit w={131}>*Untitled Project — QGIS</Fit>
        <WindowButtons>
          <svg width="12" height="12"><path d="M1 6.500h10" stroke="#000" /></svg>
          <svg width="12" height="12"><path d="M1.500 3.500h7v7h-7zM3.500 3.500v-2h7v7h-2" fill="none" stroke="#000" /></svg>
          <svg width="12" height="12"><path d="m1 1 10 10M11 1 1 11" stroke="#000" /></svg>
        </WindowButtons>
      </TitleBar>
      <MenuBar>
        {MENUS.map(([w, a, key, b]) => (
          <MenuTitle key={a + key + b} $open={b === 'lugins'}>
            <Fit w={w}>{a}<u>{key}</u>{b}</Fit>
          </MenuTitle>
        ))}
      </MenuBar>

      <ToolRow>
        <Lead />
        <Tools names="newPage folder save layout layoutManager style" />
        <Handle />
        <Gap $w={297} />
        <Tool name="zoomLast" off />
        <Tools names="mapNew map3d bookmarkNew bookmarks clock refresh" />
        <Handle />
        <Tools names="identify abacus gear sigma" />
        <Tool name="table" menu />
        <Tool name="ruler" menu />
        <Tool name="tip" />
        <Tool name="gearRun" off menu />
        <Handle />
        <Handle />
        <Gap $w={1} />
        <Tools names="greenSearch osm" />
        <Gap $w={47} />
        <Handle />
        <Gap $w={1} />
        <Tool name="hub" />
        <Tool name="crosshair" off />
        <Divider />
        <Tool name="crosshairOn" corner />
        <Gap $w={1} />
        <Tool name="crosshairAdd" off />
        <Tool name="blobStar" />
        <Gap $w={17} />
        <Chevron>»</Chevron>
      </ToolRow>

      <ToolRow>
        <Lead />
        <Tools names="sources geopackage vector feather chip gridMesh meshV" />
        <Gap $w={271} />
        <Tools off names="trash scissors copy paste undo redo" />
        <Handle />
        <Tool name="select" menu />
        <Tool name="invert" menu />
        <Tool name="deselect" menu />
        <Tool name="selectPin" menu />
        <Handle />
        <Tools names="tag pie" />
        <Divider />
        <Tools names="tagPin tagRed" />
        <Divider />
        <Tools off names="tagDot tagEye tagMove tagRotate tagEdit" />
        <Handle />
        <Tool name="globePlus" corner />
        <Tools names="globeSearch binoculars" />
        <Handle />
        <Tool name="help" />
      </ToolRow>

      <ToolRow>
        <Lead />
        <Tool name="setSquare" off />
        <Tool name="blobMove" off menu />
        <Tools off names="blobRotate blobScale simplify blobRing" />
        <Gap $w={297} />
        <Tools off names="splitPart reshape merge" />
        <Tool name="rotatePoint" off menu />
        <Handle />
        <Tool name="magnet" />
        <Tool name="snapV" off corner />
        <Tool name="snapDots" off corner pressed />
        <Gap $w={0.5} />
        <SpinBox $w={84} $off><Fit w={13}>12</Fit><Spin off /></SpinBox>
        <Gap $w={1} />
        <SpinBox $w={87} $off $pad={3}>
          <Fit w={13}>px</Fit>
          <SpinArrows $plain $w={19}><Arrow $off /></SpinArrows>
        </SpinBox>
        <Gap $w={1.5} />
        <Tool name="triLines" />
        <Tool name="blobTrace" corner />
        <Tool name="cross" off />
        <Tool name="crossFill" off menu />
        <Tool name="tracePen" off />
        <Handle />
        <Gap $w={1} />
        <Tool name="arc" off />
        <Tool name="circle" off menu />
        <Tool name="ellipse" off menu />
        <Tool name="rect" off menu />
        <Tool name="poly" off menu />
        <Handle />
        <Tool name="snapArc" />
      </ToolRow>

      <ToolRow>
        <Lead />
        <Tool name="python" />
        <Tool name="earth" menu />
        <Tools names="xyEdit plug hammer reload" />
        <ToolCaption><Fit w={12}>Re</Fit></ToolCaption>
        <Handle />
        <Tools names="pages mapPin lens lensDots" />
        <Tool name="mapFrame" menu />
        <Tool name="wireGlobe" />
        <Tool name="xy" off />
        <Tool name="wrench" />
        <Handle />
        <Tool name="gridPen" off />
        <Chevron>»</Chevron>
        <Handle />
        <Handle />
        <Gap $w={1} />
        <Tool name="annotation" menu />
        <Tools names="pointerBox annPoly annLine annStar annText annCurve annBox annImage" />
        <Divider />
        <Tool name="annForm" menu />
      </ToolRow>

      <Workspace>
        <Dock>
          <DockTitle>
            <Fit w={33}>Layers</Fit>
            <FloatButton />
          </DockTitle>
          <DockTools>
            <DockTool><Art name="brush" size={15} /></DockTool>
            <DockTool><Art name="addGroup" size={15} /></DockTool>
            <DockTool><Art name="eye" size={16} /><DockArrow /></DockTool>
            <DockTool><Art name="filter" size={15} /><DockArrow /></DockTool>
            <DockTool $off $w={38}><Art name="epsilon" size={16} /><Arrow $off /></DockTool>
            <DockTool><Art name="expand" size={15} /></DockTool>
            <DockTool><Art name="collapse" size={15} /></DockTool>
            <DockTool><Art name="removeLayer" size={15} /></DockTool>
          </DockTools>
          <Tree>
            <LayerRow>
              <CheckBox><Check /></CheckBox>
              <Swatch $color="#9fe89b" $edge="#8acb86" />
              <LayerName><Fit w={26} bold>New</Fit></LayerName>
            </LayerRow>
            <LayerRow>
              <CheckBox><Check /></CheckBox>
              <Swatch $color="#ff989f" $edge="#e0858c" />
              <LayerName $active><Fit w={19} bold><u>Old</u></Fit></LayerName>
            </LayerRow>
          </Tree>
          <Tabs>
            <Tab $w={83}><Fit w={59}>Layer Order</Fit></Tab>
            <Tab $w={63}><Fit w={40}>Browser</Fit></Tab>
            <Tab $w={55} $on><Fit w={33}>Layers</Fit></Tab>
          </Tabs>
        </Dock>
        <Splitter><SplitDots /></Splitter>
        <Canvas><Parcels /></Canvas>
      </Workspace>

      <StatusBar>
        <Locator>
          <svg width="14" height="14" viewBox="0 0 14 14"><circle cx="5.500" cy="5.500" r="4" fill="none" stroke="#888" strokeWidth="1.300" /><path d="m8.500 8.500 4 4" stroke="#888" strokeWidth="1.500" /></svg>
          <Fit w={112}>Type to locate (Ctrl+K)</Fit>
        </Locator>
        <Gap $w={402} />
        <Fit w={53}>Coordinate</Fit>
        <Gap $w={4} />
        <SpinBox $w={136} $h={22}><Fit w={122}>28.569589°, 77.229489°</Fit></SpinBox>
        <Gap $w={4} />
        <Art name="mouse" size={17} />
        <Gap $w={11} />
        <Fit w={25}>Scale</Fit>
        <Gap $w={4} />
        <SpinBox $w={81} $h={22} $pad={3}>
          <Fit w={28}>1:917</Fit>
          <SpinArrows $w={21}><Arrow /></SpinArrows>
        </SpinBox>
        <Gap $w={11} />
        <Art name="lock" size={15} />
        <Gap $w={6} />
        <Fit w={44}>Magnifier</Fit>
        <Gap $w={4} />
        <SpinBox $w={84} $h={20} $pad={4}><Fit w={28}>100%</Fit><Spin /></SpinBox>
        <Gap $w={8} />
        <Fit w={42}>Rotation</Fit>
        <Gap $w={9} />
        <SpinBox $w={84} $h={20} $pad={4}><Fit w={25}>0.0 °</Fit><Spin /></SpinBox>
        <Gap $w={6} />
        <CheckBox><Check /></CheckBox>
        <Gap $w={4} />
        <Fit w={35}>Render</Fit>
        <Gap $w={17} />
        <Art name="wireGlobe" size={15} />
        <Gap $w={1} />
        <Fit w={54}>EPSG:4326</Fit>
        <Gap $w={23} />
        <svg width="17" height="16" viewBox="0 0 17 16">
          <path d="M8 1c9 0 10 10 5 11l2 3-5-2C-2 14-2 1 8 1z" fill="#555" />
          <path d="M4 7h1.800M7.500 7h1.800M11 7h1.800" stroke="#fff" strokeWidth="1.800" />
        </svg>
      </StatusBar>

      <PluginsMenu />
    </Window>
  );
}
